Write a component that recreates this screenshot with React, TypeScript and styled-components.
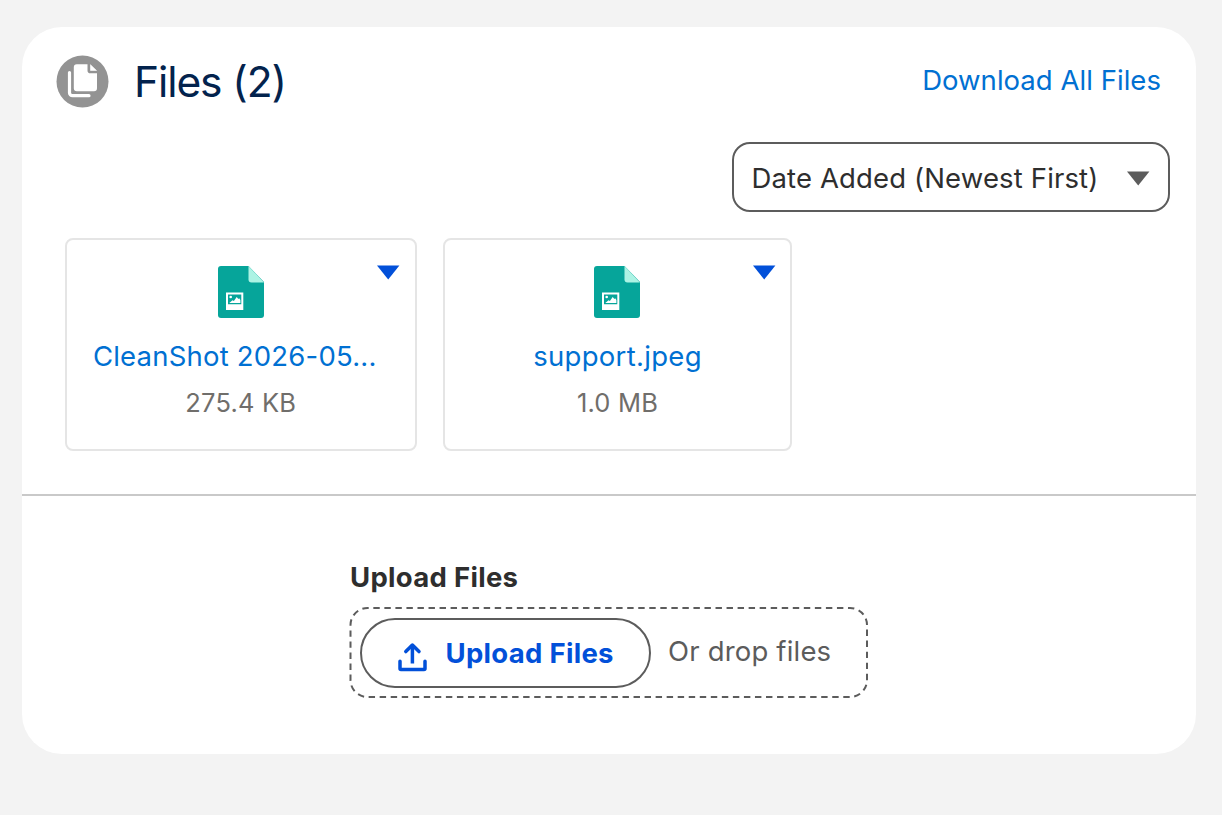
import React from 'react';
import styled, { createGlobalStyle } from 'styled-components';

const GlobalStyle = createGlobalStyle`
  * { box-sizing: border-box; }
  body {
    margin: 0;
    background: #f3f3f3;
    font-family: Inter, "Liberation Sans", sans-serif;
    color: #2e2e2e;
  }
`;

const Page = styled.main`
  min-height: 815px;
  padding: 27px 26px 61px 22px;
`;

const Card = styled.article`
  height: 727px;
  border-radius: 40px;
  background: #fff;
  overflow: hidden;
`;

const Header = styled.header`
  display: flex;
  align-items: center;
  height: 80px;
  padding: 28px 35px 0 34px;
`;

const Title = styled.h2`
  flex: 1;
  margin: 2px 0 0 25px;
  font-size: 42.5px;
  font-weight: 400;
  line-height: 52px;
  letter-spacing: -1.1px;
  color: #03234d;
`;

const TextLink = styled.a<{ $spacing: number }>`
  font-size: 27.5px;
  font-weight: 400;
  line-height: 36px;
  letter-spacing: ${(p) => p.$spacing}px;
  color: #0070d2;
  text-decoration: none;
  white-space: nowrap;
`;

const DownloadLink = styled(TextLink)`
  margin-top: -2px;
`;

const Toolbar = styled.div`
  display: flex;
  justify-content: flex-end;
  padding: 35px 26px 0 0;
`;

const SortSelect = styled.button`
  display: flex;
  align-items: center;
  justify-content: space-between;
  width: 438.5px;
  height: 70px;
  padding: 1px 18.5px 0 18px;
  border: 2px solid #5c5c5c;
  border-radius: 18px;
  background: #fff;
  color: #2e2e2e;
  font: 400 27.5px/36px Inter, "Liberation Sans", sans-serif;
  letter-spacing: 0.14px;

  svg {
    margin-top: 2px;
  }
`;

const Tiles = styled.div`
  display: flex;
  gap: 26.5px;
  height: 282px;
  padding: 26px 43px 0;
`;

const Tile = styled.section<{ $width: number }>`
  position: relative;
  display: flex;
  flex-direction: column;
  align-items: center;
  width: ${(p) => p.$width}px;
  height: 213px;
  padding-top: 26px;
  border: 2px solid #e5e5e5;
  border-radius: 8px;
`;

const TileMenu = styled.button<{ $right: number }>`
  position: absolute;
  top: 25px;
  right: ${(p) => p.$right}px;
  display: flex;
  padding: 0;
  border: 0;
  background: none;
`;

const TileName = styled(TextLink)<{ $inset: number }>`
  margin-top: 20px;
  padding-right: ${(p) => p.$inset}px;
`;

const TileSize = styled.span`
  margin-top: 12px;
  font-size: 25.5px;
  line-height: 34px;
  letter-spacing: 0.2px;
  color: #706e6b;
`;

const UploadArea = styled.footer`
  display: flex;
  flex-direction: column;
  height: 260px;
  padding: 63px 0 0 327px;
  border-top: 2px solid #c9c9c9;
`;

const UploadLabel = styled.span`
  padding-left: 1px;
  font-size: 27.5px;
  font-weight: 650;
  line-height: 36px;
  letter-spacing: 0.3px;
`;

const DropZone = styled.div`
  position: relative;
  display: flex;
  align-items: center;
  width: 519px;
  height: 91px;
  margin-top: 12px;
  padding: 0 11px;
`;

const DropOutline = styled.svg`
  position: absolute;
  inset: 0;
  pointer-events: none;
`;

const UploadButton = styled.button`
  display: flex;
  align-items: center;
  gap: 18.5px;
  width: 291px;
  height: 70px;
  padding: 0 0 0 35px;
  border: 2px solid #5c5c5c;
  border-radius: 35px;
  background: #fff;
  color: #0250d9;
  font: 650 27.5px/36px Inter, "Liberation Sans", sans-serif;
  letter-spacing: 0.3px;

  svg {
    margin-top: 8px;
  }
`;

const DropHint = styled.span`
  margin-left: 17px;
  padding-bottom: 4px;
  font-size: 27.5px;
  line-height: 36px;
  letter-spacing: 0.18px;
  color: #5c5c5c;
`;

const FilesIcon = () => (
  <svg width="53" height="53" viewBox="0 0 53 53">
    <circle cx="26.5" cy="26.5" r="26" fill="#939393" />
    <path
      d="M13.5 17.5v20.2a3 3 0 0 0 3 3h16.5"
      fill="none"
      stroke="#fff"
      strokeWidth="3.2"
      strokeLinecap="round"
    />
    <path
      d="M20.8 9.3h10.7v6.1a2.8 2.8 0 0 0 2.8 2.8h6.7v15a3 3 0 0 1-3 3H20.8a3 3 0 0 1-3-3V12.3a3 3 0 0 1 3-3z"
      fill="#fff"
    />
    <path d="M34.5 9.7v5.8h6z" fill="#fff" stroke="#fff" strokeWidth=".6" strokeLinejoin="round" />
  </svg>
);

const Caret = ({ color }: { color: string }) => (
  <svg width="24" height="15" viewBox="0 0 24 15">
    <path d="M1 .5h22.400L12.200 14.500z" fill={color} />
  </svg>
);

const FileGlyph = styled.svg<{ $shift: number }>`
  margin-right: ${(p) => p.$shift}px;
`;

const ImageFileIcon = ({ shift }: { shift: number }) => (
  <FileGlyph $shift={shift} width="46" height="52" viewBox="0 0 46 52">
    <path d="M3 0h27.5L46 16v33a3 3 0 0 1-3 3H3a3 3 0 0 1-3-3V3a3 3 0 0 1 3-3z" fill="#06a59a" />
    <path d="M30.5 0L46 16.5H33.5a3 3 0 0 1-3-3z" fill="#acf3e4" />
    <path d="M8 26.5h17.3V44H8zM10 28.5v9.7h13.3v-9.7z" fill="#fff" fillRule="evenodd" />
    <circle cx="12.7" cy="31" r="1.3" fill="#fff" />
    <path d="M11.3 37l3.2-2.8 1.4.9 2.8-4.2 1.7 2 .8-.7 1.2 1.800v3z" fill="#fff" />
  </FileGlyph>
);

const UploadIcon = () => (
  <svg width="30" height="30" viewBox="0 0 30 30" fill="none" stroke="#0250d9" strokeWidth="3.5" strokeLinecap="round" strokeLinejoin="round">
    <path d="M3 19.200v7.200a1 1 0 0 0 1 1h23a1 1 0 0 0 1-1v-7.200" />
    <path d="M15.400 21.500V4" strokeLinecap="butt" />
    <path d="M8.800 9.600L15.400 3l6.600 6.600" />
  </svg>
);

interface FileItem {
  name: string;
  size: string;
  width: number;
  inset: number;
  spacing: number;
  iconShift: number;
  menuRight: number;
}

const files: FileItem[] = [
  { name: 'CleanShot 2026-05...', size: '275.4 KB', width: 351.5, inset: 12, spacing: 0.2, iconShift: 0, menuRight: 14.5 },
  { name: 'support.jpeg', size: '1.0 MB', width: 349, inset: 0, spacing: 0.3, iconShift: 2, menuRight: 14 },
];

export default function App() {
  return (
    <>
      <GlobalStyle />
      <Page>
        <Card>
          <Header>
            <FilesIcon />
            <Title>Files (2)</Title>
            <DownloadLink $spacing={0.04}>Download All Files</DownloadLink>
          </Header>
          <Toolbar>
            <SortSelect>
              Date Added (Newest First)
              <Caret color="#5c5c5c" />
            </SortSelect>
          </Toolbar>
          <Tiles>
            {files.map((file) => (
              <Tile key={file.name} $width={file.width}>
                <ImageFileIcon shift={file.iconShift} />
                <TileMenu aria-label="File actions" $right={file.menuRight}>
                  <Caret color="#0250d9" />
                </TileMenu>
                <TileName $spacing={file.spacing} $inset={file.inset}>{file.name}</TileName>
                <TileSize>{file.size}</TileSize>
              </Tile>
            ))}
          </Tiles>
          <UploadArea>
            <UploadLabel>Upload Files</UploadLabel>
            <DropZone>
              <DropOutline width="519" height="91" viewBox="0 0 519 91">
                <rect
                  x="1.5"
                  y="1"
                  width="516.5"
                  height="89"
                  rx="17"
                  fill="none"
                  stroke="#5c5c5c"
                  strokeWidth="2"
                  pathLength="1177"
                  strokeDasharray="6.4 4.6"
                  strokeDashoffset="-5.8"
                />
              </DropOutline>
              <UploadButton>
                <UploadIcon />
                Upload Files
              </UploadButton>
              <DropHint>Or drop files</DropHint>
            </DropZone>
          </UploadArea>
        </Card>
      </Page>
    </>
  );
}
